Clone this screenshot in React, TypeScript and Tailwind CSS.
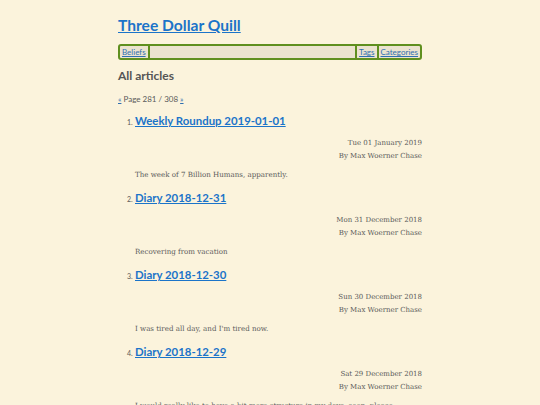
import React from 'react';

interface Article {
  title: string;
  date: string;
  summary: string;
}

const articles: Article[] = [
  { title: 'Weekly Roundup 2019-01-01', date: 'Tue 01 January 2019', summary: 'The week of 7 Billion Humans, apparently.' },
  { title: 'Diary 2018-12-31', date: 'Mon 31 December 2018', summary: 'Recovering from vacation' },
  { title: 'Diary 2018-12-30', date: 'Sun 30 December 2018', summary: "I was tired all day, and I'm tired now." },
  { title: 'Diary 2018-12-29', date: 'Sat 29 December 2018', summary: 'I would really like to have a bit more structure in my days, soon, please.' },
];

const sans = "font-['Lato',sans-serif]";
const serif = "font-['DejaVu_Serif',serif]";

const App = () => {
  return (
    <div className="min-h-[405px] bg-[#fbf3dc] text-[#5a5a5a]">
      <div className="mx-auto w-[304px] pt-[14px]">
        <h1 className={`${sans} text-[15.6px] font-bold leading-[22px] text-[#1b74c9] underline`}>
          Three Dollar Quill
        </h1>

        <nav className={`${sans} mt-[8px] flex h-[16px] items-stretch rounded-[3px] border-2 border-[#5f8f1f] bg-[#ebe3cf] text-[8px] leading-[12px]`}>
          <a className="border-r-2 border-[#5f8f1f] px-[2px] text-[#2f6fb0] underline">Beliefs</a>
          <div className="flex-1 border-r-2 border-[#5f8f1f]" />
          <a className="border-r-2 border-[#5f8f1f] px-[2px] text-[#2f6fb0] underline">Tags</a>
          <a className="px-[2px] text-[#2f6fb0] underline">Categories</a>
        </nav>

        <h2 className={`${sans} mt-[7px] text-[12px] font-bold leading-[18px] text-[#555]`}>All articles</h2>

        <p className={`${sans} mt-[9px] text-[8px] leading-[10px]`}>
          <a className="text-[#2f6fb0] underline">«</a> Page 281 / 308 <a className="text-[#2f6fb0] underline">»</a>
        </p>

        <ol className="mt-[8px] pl-[17px]">
          {articles.map((a, i) => (
            <li key={a.title} className="h-[77px]">
              <div className="flex items-baseline">
                <span className={`${sans} -ml-[8px] w-[8px] text-[7px]`}>{i + 1}.</span>
                <a className={`${sans} text-[11.4px] font-bold leading-[18px] text-[#1b74c9] underline`}>{a.title}</a>
              </div>
              <div className={`${serif} mt-[7px] text-right text-[7px] leading-[13px]`}>
                <div>{a.date}</div>
                <div>By Max Woerner Chase</div>
              </div>
              <p className={`${serif} mt-[6px] text-[7.1px] leading-[12px]`}>{a.summary}</p>
            </li>
          ))}
        </ol>
      </div>
    </div>
  );
};

export default App;
